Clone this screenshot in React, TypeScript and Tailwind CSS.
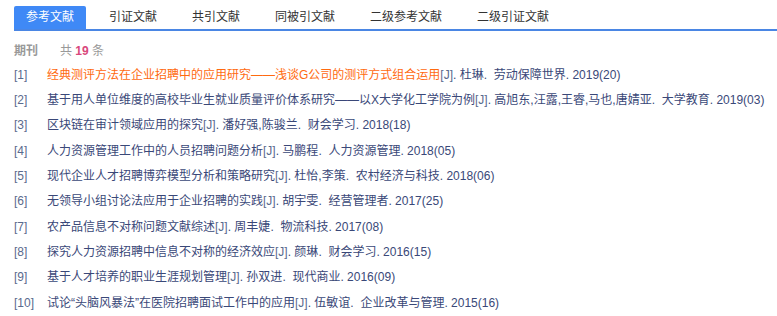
import { useState } from "react";

type Ref = {
  title: string;
  authors: string;
  source: string;
  year: string;
};

const tabs = ["参考文献", "引证文献", "共引文献", "同被引文献", "二级参考文献", "二级引证文献"];

const refs: Ref[] = [
  { title: "经典测评方法在企业招聘中的应用研究——浅谈G公司的测评方式组合运用", authors: "杜琳", source: "劳动保障世界", year: "2019(20)" },
  { title: "基于用人单位维度的高校毕业生就业质量评价体系研究——以X大学化工学院为例", authors: "高旭东,汪露,王睿,马也,唐婧亚", source: "大学教育", year: "2019(03)" },
  { title: "区块链在审计领域应用的探究", authors: "潘好强,陈骏兰", source: "财会学习", year: "2018(18)" },
  { title: "人力资源管理工作中的人员招聘问题分析", authors: "马鹏程", source: "人力资源管理", year: "2018(05)" },
  { title: "现代企业人才招聘博弈模型分析和策略研究", authors: "杜怡,李策", source: "农村经济与科技", year: "2018(06)" },
  { title: "无领导小组讨论法应用于企业招聘的实践", authors: "胡宇雯", source: "经营管理者", year: "2017(25)" },
  { title: "农产品信息不对称问题文献综述", authors: "周丰婕", source: "物流科技", year: "2017(08)" },
  { title: "探究人力资源招聘中信息不对称的经济效应", authors: "颜琳", source: "财会学习", year: "2016(15)" },
  { title: "基于人才培养的职业生涯规划管理", authors: "孙双进", source: "现代商业", year: "2016(09)" },
  { title: "试论“头脑风暴法”在医院招聘面试工作中的应用", authors: "伍敏谊", source: "企业改革与管理", year: "2015(16)" },
];

const App = () => {
  const [active, setActive] = useState(0);

  return (
    <div className="w-[777px] h-[316px] bg-white overflow-hidden text-[12px] font-['Liberation_Sans','Noto_Sans_CJK_SC',sans-serif]">
      <div className="pt-[6px] pl-[14px]">
        <div className="flex gap-[11px] border-b-[2px] border-[#4a86e4] h-[25px]">
          {tabs.map((t, i) => (
            <button
              key={t}
              onClick={() => setActive(i)}
              className={
                i === active
                  ? "h-[23px] px-[12px] rounded-t-[2px] bg-[#3f89f6] text-white leading-[23px]"
                  : "h-[23px] px-[12px] text-[#333] leading-[23px]"
              }
            >
              {t}
            </button>
          ))}
        </div>
      </div>

      <div className="pl-[14px] mt-[11px] flex items-center h-[17px]">
        <span className="font-bold text-[#999] w-[46px]">期刊</span>
        <span className="text-[#999]">
          共 <span className="font-bold text-[#d9487c]">19</span> 条
        </span>
      </div>

      <ul className="pl-[14px] mt-[3px]">
        {refs.map((r, i) => (
          <li key={i} className="flex h-[25.33px] items-center whitespace-nowrap">
            <span className="w-[33px] text-[#5a6a8e]">[{i + 1}]</span>
            <span className={i === 0 ? "text-[#ff6a10]" : "text-[#3a4878]"}>{r.title}</span>
            <span className="text-[#5a6a8e]">[J]</span>
            <span className="text-[#3a4878]">. {r.authors}.&nbsp; {r.source}. </span>
            <span className="text-[#3a4878]">&nbsp;{r.year}</span>
          </li>
        ))}
      </ul>
    </div>
  );
};

export default App;
